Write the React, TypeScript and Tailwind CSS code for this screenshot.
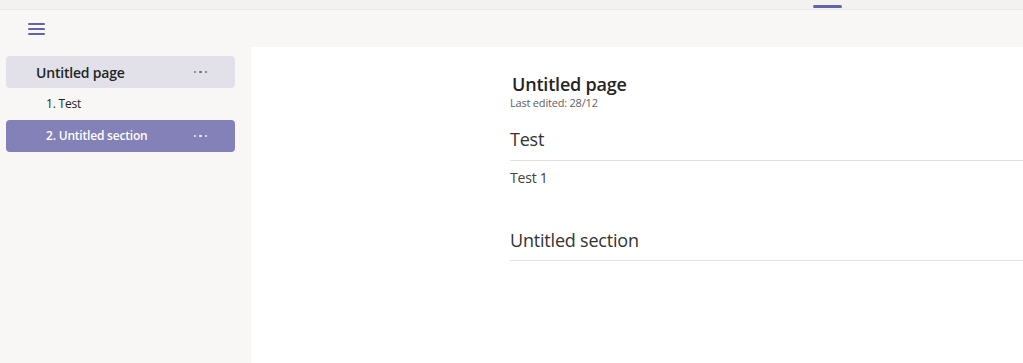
const font = { fontFamily: '"Open Sans", "Noto Sans", sans-serif' };

function Dots({ light }: { light?: boolean }) {
  return (
    <div className={`flex items-center gap-[3px] ${light ? "text-white/90" : "text-gray-500"}`}>
      <span className="h-[2.5px] w-[2.5px] rounded-full bg-current" />
      <span className="h-[2.5px] w-[2.5px] rounded-full bg-current" />
      <span className="h-[2.5px] w-[2.5px] rounded-full bg-current" />
    </div>
  );
}

export default function App() {
  return (
    <div className="flex h-[363px] w-[1023px] flex-col overflow-hidden bg-[#f8f7f6]" style={font}>
      {/* top tab strip */}
      <div className="relative h-[10px] shrink-0 border-b border-[#ebebeb] bg-[#f3f2f1]">
        <div className="absolute left-[813px] top-[5px] h-[3px] w-[29px] rounded-sm bg-[#6264a7]" />
      </div>

      {/* toolbar */}
      <div className="flex h-[37px] shrink-0 items-center pl-[28px]">
        <button className="flex flex-col gap-[3px]">
          <span className="h-[2px] w-[17px] rounded bg-[#6264a7]" />
          <span className="h-[2px] w-[17px] rounded bg-[#6264a7]" />
          <span className="h-[2px] w-[17px] rounded bg-[#6264a7]" />
        </button>
      </div>

      <div className="flex flex-1">
        {/* sidebar */}
        <aside className="w-[251px] shrink-0 pl-[6px] pr-[16px] pt-[9px]">
          <div className="flex h-[32px] items-center justify-between rounded bg-[#e2e1ea] pl-[30px] pr-[28px]">
            <span className="text-[14px] font-semibold tracking-[-0.2px] text-[#242424]">Untitled page</span>
            <Dots />
          </div>
          <div className="flex h-[32px] items-center pl-[40px] text-[12px] tracking-[-0.2px] text-[#242424]">1. Test</div>
          <div className="flex h-[32px] items-center justify-between rounded bg-[#8381b7] pl-[40px] pr-[28px]">
            <span className="text-[12px] font-semibold tracking-[-0.2px] text-white">2. Untitled section</span>
            <Dots light />
          </div>
        </aside>

        {/* main */}
        <main className="flex-1 bg-white pl-[259px] pt-[25px]">
          <h1 className="pl-[2px] text-[18px] font-semibold leading-[24px] tracking-[-0.2px] text-[#242424]">Untitled page</h1>
          <p className="text-[11px] leading-[13px] tracking-[-0.2px] text-[#616161]">Last edited: 28/12</p>

          <h2 className="mt-[18px] text-[18px] leading-[24px] tracking-[-0.2px] text-[#333333]">Test</h2>
          <div className="mt-[9px] border-b border-[#e0e0e0]" />
          <p className="mt-[7px] text-[14px] leading-[20px] tracking-[-0.2px] text-[#424242]">Test 1</p>

          <h2 className="mt-[40px] text-[18px] leading-[24px] tracking-[-0.2px] text-[#333333]">Untitled section</h2>
          <div className="mt-[8px] border-b border-[#e0e0e0]" />
        </main>
      </div>
    </div>
  );
}
